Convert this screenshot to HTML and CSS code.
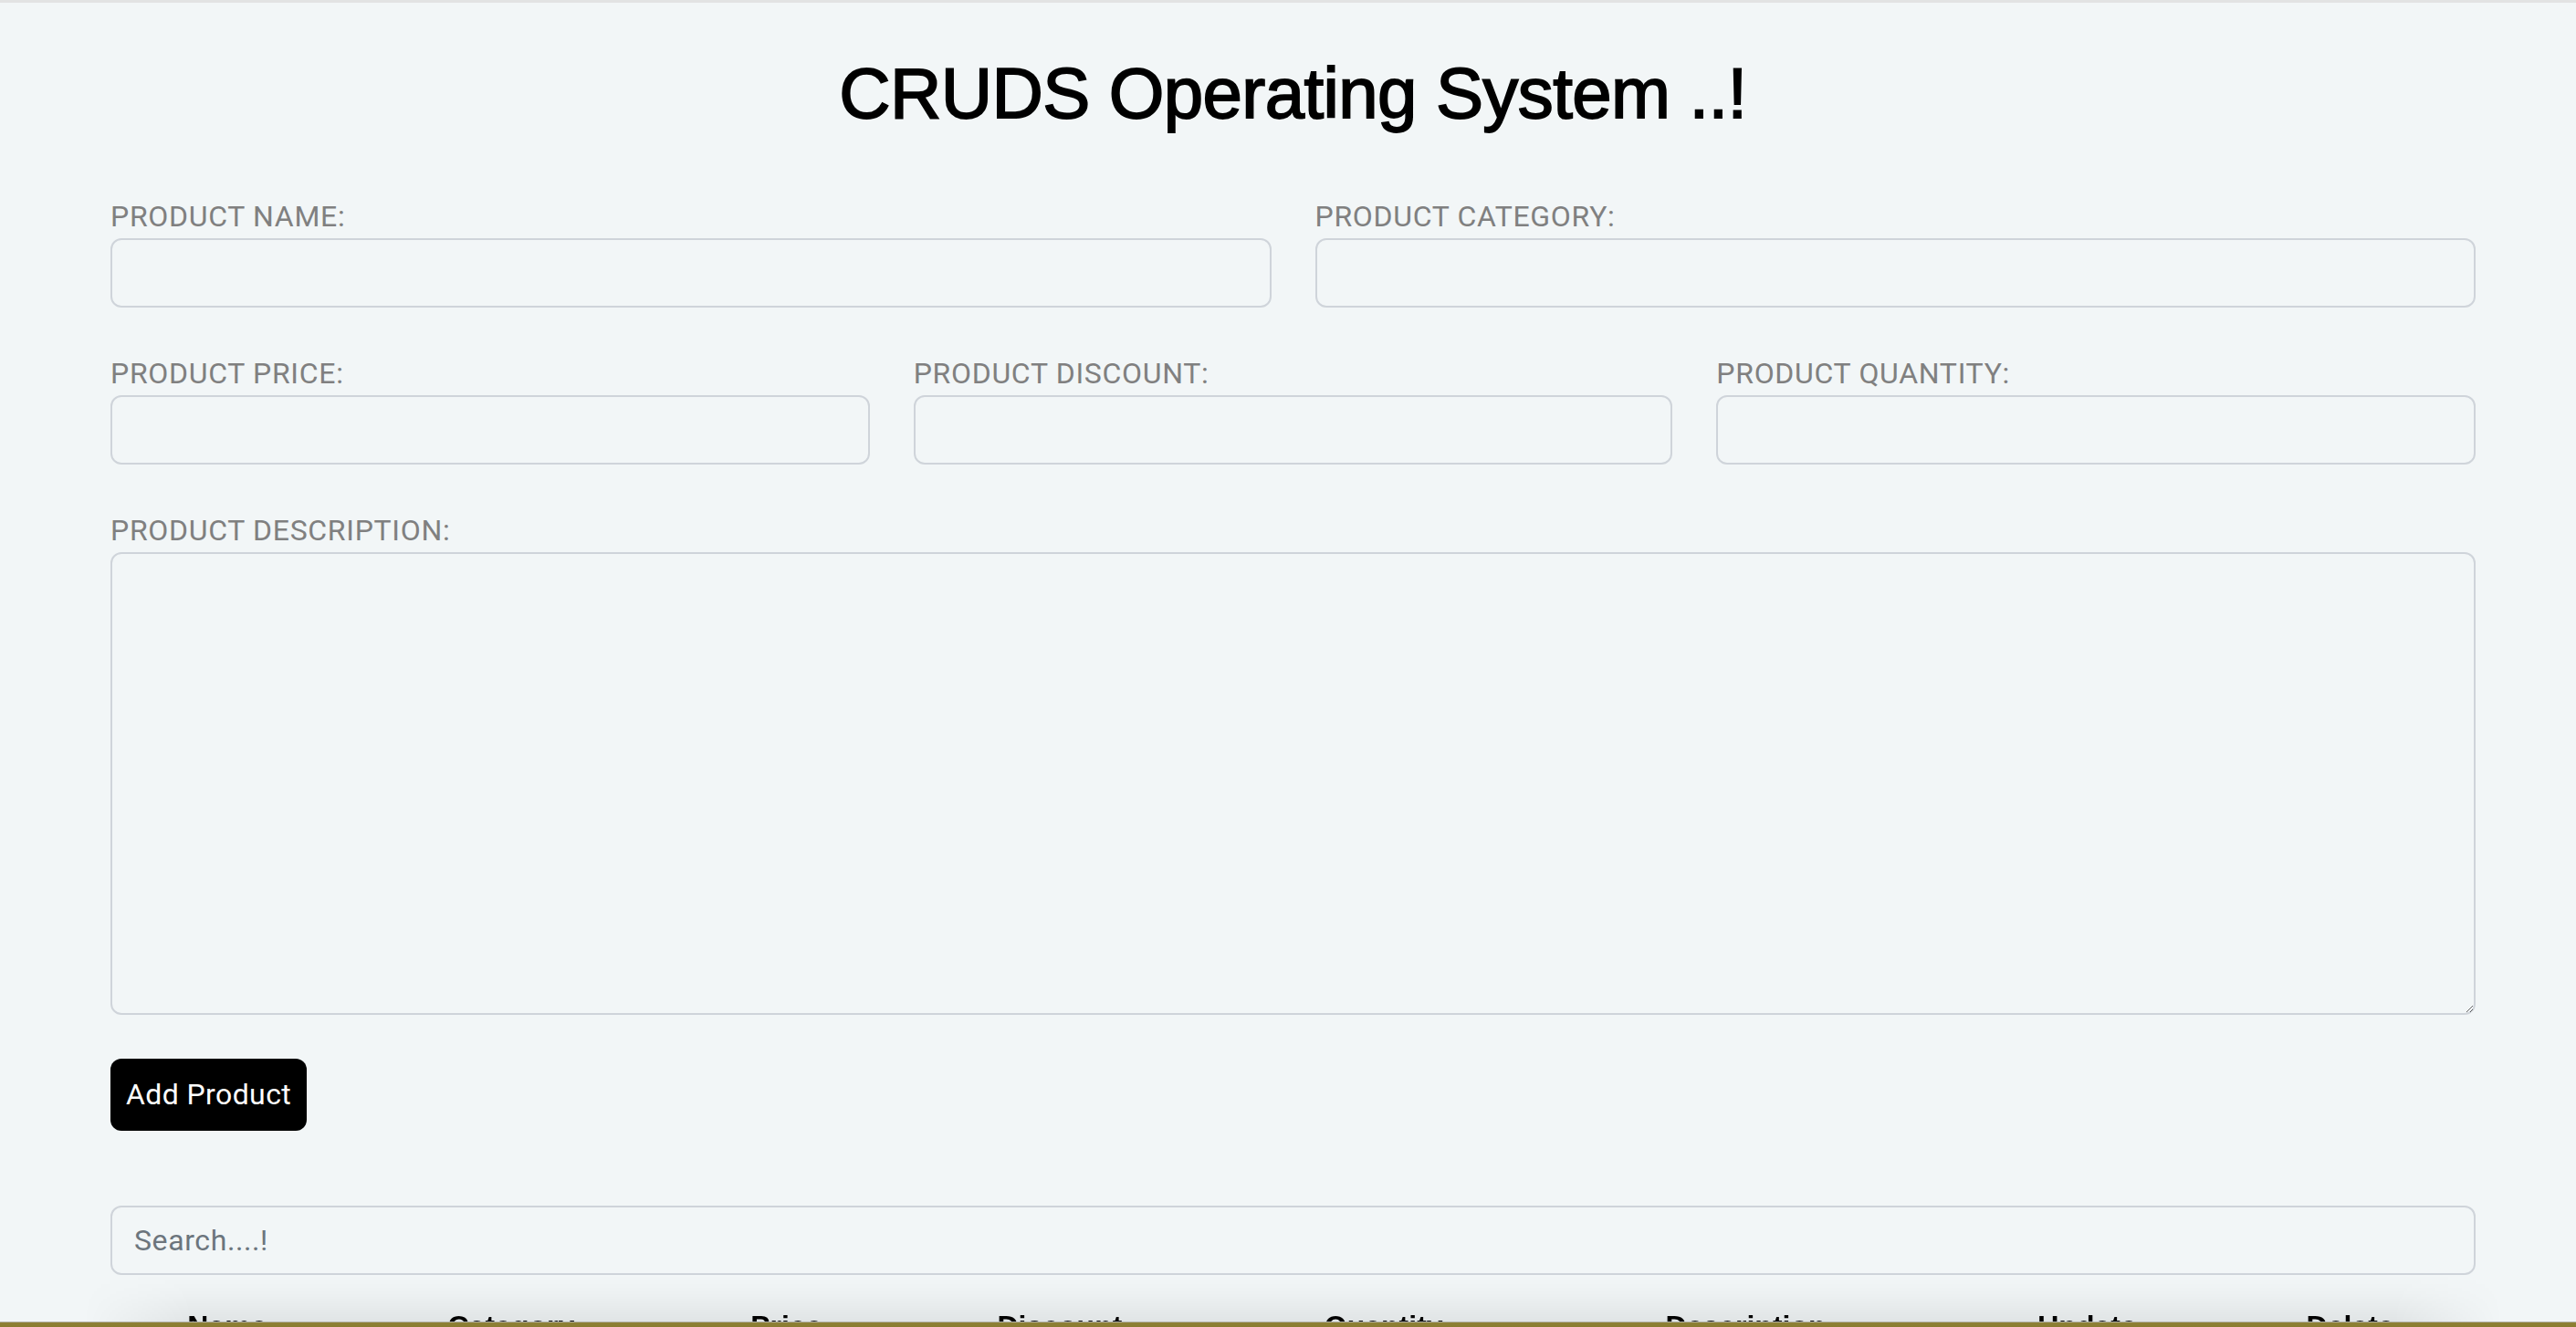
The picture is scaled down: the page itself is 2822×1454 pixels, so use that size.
FILE: index.html
```html
<!DOCTYPE html>
<html lang="en">
<head>
<meta charset="utf-8">
<title>CRUDS Operating System</title>
<link rel="stylesheet" href="styles.css">
</head>
<body>
<div class="page">
  <h1 class="title">CRUDS Operating System ..!</h1>

  <div class="row row-2">
    <div class="field">
      <label class="label" for="pname">PRODUCT NAME:</label>
      <input class="control" id="pname" type="text">
    </div>
    <div class="field">
      <label class="label" for="pcat">PRODUCT CATEGORY:</label>
      <input class="control" id="pcat" type="text">
    </div>
  </div>

  <div class="row row-3">
    <div class="field">
      <label class="label" for="pprice">PRODUCT PRICE:</label>
      <input class="control" id="pprice" type="number">
    </div>
    <div class="field">
      <label class="label" for="pdisc">PRODUCT DISCOUNT:</label>
      <input class="control" id="pdisc" type="number">
    </div>
    <div class="field">
      <label class="label" for="pqty">PRODUCT QUANTITY:</label>
      <input class="control" id="pqty" type="number">
    </div>
  </div>

  <div class="field">
    <label class="label" for="pdesc">PRODUCT DESCRIPTION:</label>
    <textarea class="control area" id="pdesc"></textarea>
  </div>

  <button class="btn-add" type="button">Add Product</button>

  <input class="control search" type="text" placeholder="Search....!">

  <div class="table-wrap">
    <table class="table">
      <thead>
        <tr>
          <th>Name</th>
          <th>Category</th>
          <th>Price</th>
          <th>Discount</th>
          <th>Quantity</th>
          <th>Description</th>
          <th>Update</th>
          <th>Delete</th>
        </tr>
      </thead>
      <tbody></tbody>
    </table>
  </div>
</div>
<div class="desk-edge"></div>
</body>
</html>
```

FILE: styles.css
```css
html, body {
  background: #f2f6f7;
}
body {
  margin: 0;
  border-top: 3px solid #e2e3e3;
  font-family: Roboto, "Liberation Sans", Arial, sans-serif;
  color: #000;
  overflow: hidden;
  height: 1451px;
}
.page {
  width: 2591px;
  margin-left: 121px;
  padding-top: 52px;
}
.title {
  margin: 0 0 64px;
  font-family: "Liberation Sans", Arial, sans-serif;
  font-weight: 400;
  font-size: 78px;
  line-height: 94px;
  letter-spacing: -0.6px;
  -webkit-text-stroke: 1.8px #000;
  text-align: center;
}
.row {
  display: grid;
  column-gap: 48px;
  margin-bottom: 48px;
}
.row-2 { grid-template-columns: 1fr 1fr; }
.row-3 { grid-template-columns: 1fr 1fr 1fr; }
.field {
  display: flex;
  flex-direction: column;
}
.label {
  font-size: 32px;
  line-height: 48px;
  letter-spacing: 0.7px;
  color: #808080;
}
.control {
  box-sizing: border-box;
  display: block;
  width: 100%;
  height: 76px;
  margin: 0;
  padding: 12px 24px;
  border: 2px solid #cfd4da;
  border-radius: 12px;
  background: transparent;
  font-family: Roboto, "Liberation Sans", Arial, sans-serif;
  font-size: 32px;
  line-height: 48px;
  letter-spacing: 0.6px;
  color: #212529;
  outline: none;
}
.control::placeholder {
  color: #6c757d;
}
.area {
  height: 507px;
  resize: vertical;
}
.btn-add {
  display: block;
  box-sizing: border-box;
  height: 79px;
  margin-top: 48px;
  padding: 0 17px;
  border: 0;
  border-radius: 12px;
  background: #000;
  color: #fff;
  font-family: Roboto, "Liberation Sans", Arial, sans-serif;
  font-size: 32px;
  line-height: 79px;
  letter-spacing: 0.4px;
}
.search {
  margin-top: 82px;
}
.table-wrap {
  margin: 0 -30px;
  padding: 16px 30px 0;
  background: linear-gradient(to bottom, rgba(0,0,0,0) 0, rgba(0,0,0,0.02) 20px, rgba(0,0,0,0.07) 52px, rgba(0,0,0,0.09) 120px);
  -webkit-mask-image: linear-gradient(to right, transparent 0, #000 120px, #000 calc(100% - 120px), transparent 100%);
  mask-image: linear-gradient(to right, transparent 0, #000 120px, #000 calc(100% - 120px), transparent 100%);
}
.table {
  width: 100%;
  border-collapse: collapse;
  font-family: "Liberation Sans", Arial, sans-serif;
}
.table th {
  padding: 16px;
  font-size: 32px;
  line-height: 48px;
  font-weight: 700;
  text-align: center;
  color: #000;
  border-bottom: 2px solid #dee2e6;
}
.desk-edge {
  position: fixed;
  left: 0;
  right: 0;
  bottom: 0;
  height: 6px;
  background: linear-gradient(to bottom, #b4b3aa 0, #b4b3aa 1px, #8e8136 1px, #8a7c30 100%);
}
```
